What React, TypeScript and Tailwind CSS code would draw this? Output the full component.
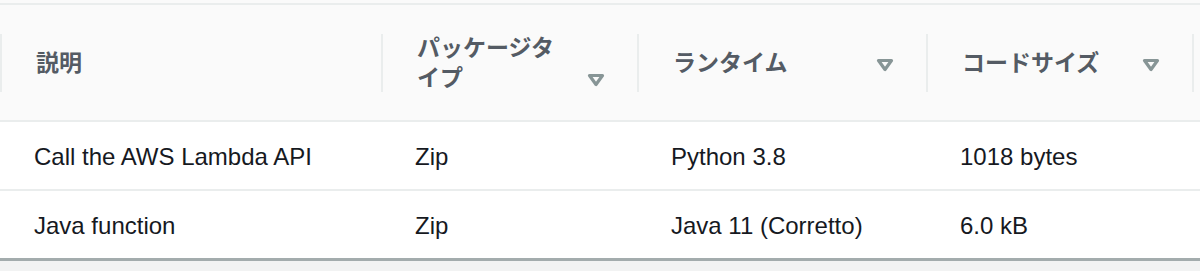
import React from 'react';

type Col = { label: string; sortable: boolean };

const columns: Col[] = [
  { label: '説明', sortable: false },
  { label: 'パッケージタイプ', sortable: true },
  { label: 'ランタイム', sortable: true },
  { label: 'コードサイズ', sortable: true },
];

const rows = [
  ['Call the AWS Lambda API', 'Zip', 'Python 3.8', '1018 bytes'],
  ['Java function', 'Zip', 'Java 11 (Corretto)', '6.0 kB'],
];

const gridCols = 'grid grid-cols-[381px_256px_289px_266px_1fr]';

const SortCaret: React.FC = () => (
  <svg width="18" height="14" viewBox="0 0 18 14" className="shrink-0">
    <path
      d="M2.5 2.5 H15.5 L9 11.5 Z"
      fill="none"
      stroke="#879596"
      strokeWidth="3.2"
      strokeLinejoin="round"
    />
  </svg>
);

const App: React.FC = () => {
  return (
    <div
      className="w-[1200px] h-[271px] bg-[#f2f3f3] overflow-hidden"
      style={{ fontFamily: '"Liberation Sans", "Noto Sans CJK JP", sans-serif' }}
    >
      <div className="bg-[#fafafa] pt-[3px]">
        {/* Header */}
        <div className={`${gridCols} h-[119px] border-t-2 border-b-2 border-[#eaeded] items-center`}>
          {columns.map((c) => (
            <div key={c.label} className="border-l-2 border-[#eaeded] h-[58px] flex items-center pl-[34px] pr-[32px]">
              <div className="flex items-end w-full gap-4">
                <span className="flex-1 text-[23px] leading-[30px] font-bold text-[#545b64] max-w-[150px] break-all">
                  {c.label}
                </span>
                {c.sortable && (
                  <span className="ml-auto h-[30px] flex items-center pt-[4px]">
                    <SortCaret />
                  </span>
                )}
              </div>
            </div>
          ))}
          <div className="border-l-2 border-[#eaeded] h-[58px]" />
        </div>
      </div>

      {/* Body */}
      <div className="bg-white border-b-[3px] border-[#a3acad]">
        {rows.map((r, i) => (
          <div
            key={i}
            className={`${gridCols} items-center pt-[3px] ${i === 0 ? 'h-[69px] border-b-2 border-[#eaeded]' : 'h-[67px]'}`}
          >
            {r.map((cell, j) => (
              <div key={j} className="pl-[34px] text-[24px] text-[#16191f] whitespace-nowrap">
                {cell}
              </div>
            ))}
            <div />
          </div>
        ))}
      </div>
    </div>
  );
};

export default App;
